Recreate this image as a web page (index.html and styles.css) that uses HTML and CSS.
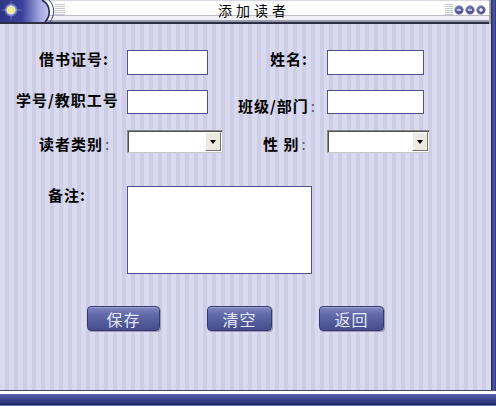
FILE: index.html
```html
<!DOCTYPE html>
<html lang="zh-CN">
<head>
<meta charset="utf-8">
<title>添加读者</title>
<link rel="stylesheet" href="styles.css">
</head>
<body>
<div class="window">
  <div class="frame">
    <div class="main">
      <header class="titlebar">
        <svg class="logo" width="55" height="22" viewBox="0 0 55 22">
          <defs>
            <linearGradient id="lg" x1="0" x2="1" y1="0" y2="0">
              <stop offset="0" stop-color="#2f3586"/>
              <stop offset="0.45" stop-color="#3a409a"/>
              <stop offset="0.82" stop-color="#a6aade"/>
              <stop offset="1" stop-color="#c4c7ec"/>
            </linearGradient>
            <radialGradient id="sun">
              <stop offset="0" stop-color="#ffffd0"/>
              <stop offset="0.6" stop-color="#f2ee70"/>
              <stop offset="1" stop-color="#d6cf5a"/>
            </radialGradient>
            <radialGradient id="glow">
              <stop offset="0.45" stop-color="#ffffff" stop-opacity="0.85"/>
              <stop offset="1" stop-color="#ffffff" stop-opacity="0"/>
            </radialGradient>
          </defs>
          <path d="M0 0 H42 C51 5 51 16 45 22 H0 Z" fill="url(#lg)"/>
          <path d="M42 0 C51 5 51 16 45 22" fill="none" stroke="#23275e" stroke-width="1.6"/>
          <path d="M49 0 C55 6 55 15 50 22" fill="none" stroke="#3a3f80" stroke-width="1"/>
          <line x1="1" y1="10" x2="22" y2="10" stroke="#ffffff" stroke-opacity="0.45" stroke-width="0.6"/>
          <line x1="11" y1="1" x2="11" y2="20" stroke="#ffffff" stroke-opacity="0.45" stroke-width="0.6"/>
          <circle cx="11" cy="10" r="7" fill="url(#glow)"/>
          <circle cx="11" cy="10" r="3.6" fill="url(#sun)" stroke="#ffffff" stroke-width="0.8"/>
        </svg>
        <div class="grip grip-left"></div>
        <div class="title">添加读者</div>
        <div class="spacer"></div>
        <div class="grip grip-right"></div>
        <svg class="ctrls" width="32" height="10" viewBox="0 0 32 10">
          <defs>
            <radialGradient id="cb" cx="0.4" cy="0.35" r="0.7">
              <stop offset="0" stop-color="#7a80c0"/>
              <stop offset="1" stop-color="#343a7a"/>
            </radialGradient>
          </defs>
          <circle cx="5" cy="5" r="4.3" fill="url(#cb)" stroke="#9a9ab8" stroke-width="0.9"/>
          <line x1="3" y1="5" x2="7" y2="5" stroke="#ffffff" stroke-width="1.2"/>
          <circle cx="16" cy="5" r="4.3" fill="url(#cb)" stroke="#9a9ab8" stroke-width="0.9"/>
          <line x1="14" y1="5" x2="18" y2="5" stroke="#ffffff" stroke-width="1.2"/>
          <circle cx="27" cy="5" r="4.3" fill="url(#cb)" stroke="#9a9ab8" stroke-width="0.9"/>
          <line x1="25" y1="5" x2="29" y2="5" stroke="#ffffff" stroke-width="1.2"/>
          <line x1="27" y1="3" x2="27" y2="7" stroke="#ffffff" stroke-width="1.2"/>
        </svg>
      </header>

      <form class="content">
        <div class="row row-1">
          <label class="lbl l-card">借书证号<span class="colon">:</span></label>
          <input class="field f-left h25" type="text">
          <label class="lbl l-name">姓名<span class="colon">:</span></label>
          <input class="field f-right h25" type="text">
        </div>

        <div class="row row-2">
          <label class="lbl l-no">学号/教职工号</label>
          <input class="field f-left h24" type="text">
          <label class="lbl l-dept">班级/部门<span class="colon thin">:</span></label>
          <input class="field f-right h24" type="text">
        </div>

        <div class="row row-3">
          <label class="lbl l-type">读者类别<span class="colon thin">:</span></label>
          <div class="select s-left"><span class="sel-btn"><span class="tri"></span></span></div>
          <label class="lbl l-sex">性 别<span class="colon thin">:</span></label>
          <div class="select s-right"><span class="sel-btn"><span class="tri"></span></span></div>
        </div>

        <div class="row row-4">
          <label class="lbl l-memo">备注<span class="colon">:</span></label>
          <textarea class="memo"></textarea>
        </div>

        <div class="actions">
          <button type="button" class="btn btn-wide">保存</button>
          <button type="button" class="btn">清空</button>
          <button type="button" class="btn">返回</button>
        </div>
      </form>
    </div>
    <div class="edge"></div>
  </div>
  <div class="footer"></div>
</div>
</body>
</html>
```

FILE: styles.css
```css
* { box-sizing: border-box; }

html, body {
  margin: 0;
  padding: 0;
  background: #3c4590;
}

body {
  width: 496px;
  height: 406px;
  overflow: hidden;
  font-family: "Noto Sans CJK SC", "Noto Sans", sans-serif;
  color: #000;
}

.window {
  width: 496px;
  height: 406px;
  display: flex;
  flex-direction: column;
}

.frame {
  display: flex;
  height: 390px;
}

.main {
  width: 491px;
  display: flex;
  flex-direction: column;
}

.edge {
  width: 5px;
  border-left: 1px solid #2a2c48;
  background: linear-gradient(90deg, #3c4590, #4a54a4 60%, #2c3270);
}

/* ---------- title bar ---------- */
.titlebar {
  height: 24px;
  display: flex;
  align-items: flex-start;
  border-right: 2px solid #a4a4b8;
  background: linear-gradient(to bottom,
    #d8d8e2 0 1px,
    #ffffff 1px 15px,
    #bcbcca 15px 16px,
    #f0f0f6 16px 20px,
    #9a9ab0 20px 22px,
    #2c2e46 22px 24px);
}

.logo {
  display: block;
  flex: none;
}

.grip {
  flex: none;
  height: 11px;
  margin-top: 4px;
  background: repeating-linear-gradient(to bottom, #c4c4d2 0 1px, transparent 1px 2px);
}

.grip-left { width: 10px; }
.grip-right { width: 8px; margin-right: 1px; }

.title {
  flex: none;
  margin-left: 153px;
  margin-top: 3px;
  font-size: 14px;
  line-height: 14px;
  letter-spacing: 4px;
  color: #000;
}

.spacer { flex: 1; }

.ctrls {
  display: block;
  flex: none;
  margin-top: 5px;
  margin-right: 3px;
}

/* ---------- content ---------- */
.content {
  flex: 1;
  margin: 0;
  padding-top: 26px;
  display: flex;
  flex-direction: column;
  background: repeating-linear-gradient(90deg,
    #d9d9ef 0 5px,
    #cdcee6 5px 9px);
}

.row {
  display: grid;
  grid-template-columns: 127px 111px 89px auto;
  align-items: start;
}

.row-2 { margin-top: 15px; }
.row-3 { margin-top: 16px; }
.row-4 { margin-top: 33px; grid-template-columns: 127px auto; }

.lbl {
  font-size: 15px;
  line-height: 15px;
  font-weight: bold;
  letter-spacing: 1px;
  white-space: nowrap;
}

.colon { letter-spacing: 0; }
.colon.thin {
  font-weight: normal;
  color: #555566;
  margin-left: 2px;
}

.l-card { padding-left: 39px; margin-top: 1px; }
.l-name { padding-left: 32px; margin-top: 1px; }
.l-no   { padding-left: 16px; margin-top: 2px; }
.l-dept { padding-left: 0;    margin-top: 8px; }
.l-type { padding-left: 39px; margin-top: 6px; }
.l-sex  { padding-left: 25px; margin-top: 6px; }
.l-memo { padding-left: 48px; margin-top: 1px; }

.field {
  display: block;
  margin: 0;
  padding: 0 3px;
  border: 1px solid #50508c;
  background: #fff;
  font: 13px "Noto Sans CJK SC", sans-serif;
  outline: none;
}

.f-left  { width: 81px; }
.f-right { width: 97px; }
.h25 { height: 25px; }
.h24 { height: 24px; }

/* dropdown */
.select {
  display: flex;
  justify-content: flex-end;
  height: 23px;
  padding: 1px;
  background: #fff;
  border: 1px solid;
  border-color: #8a8a8a #c8c8c8 #c8c8c8 #8a8a8a;
  box-shadow: inset 1px 1px 0 #505050;
}

.s-left  { width: 96px; }
.s-right { width: 103px; }

.sel-btn {
  width: 16px;
  height: 100%;
  display: flex;
  align-items: center;
  justify-content: center;
  background: #ece9e0;
  border: 1px solid;
  border-color: #ffffff #707070 #707070 #ffffff;
}

.tri {
  width: 0;
  height: 0;
  border-left: 3.5px solid transparent;
  border-right: 3.5px solid transparent;
  border-top: 4px solid #000;
}

.memo {
  display: block;
  width: 185px;
  height: 88px;
  margin: 0;
  padding: 2px;
  border: 1px solid #50508c;
  background: #fff;
  resize: none;
  outline: none;
}

/* buttons */
.actions {
  display: flex;
  gap: 47px;
  margin-top: 32px;
  padding-left: 87px;
}

.btn {
  width: 65px;
  height: 25px;
  margin: 0;
  padding: 0;
  border: 1px solid #343a6e;
  border-radius: 4px;
  background: linear-gradient(to bottom, #8088c2 0, #646cac 30%, #515999 70%, #464e8c 100%);
  box-shadow: 1px 1px 0 #9a9ab6, inset 0 1px 0 #9aa0d4;
  color: #e6e8f8;
  font-family: "Noto Sans CJK SC", sans-serif;
  font-size: 16px;
  line-height: 22px;
  letter-spacing: 1px;
}

.btn-wide { width: 73px; }

/* ---------- bottom frame ---------- */
.footer {
  height: 16px;
  background: linear-gradient(to bottom,
    #4a4a66 0 1px,
    #ffffff 1px 4px,
    #5a64ac 4px,
    #3e4690 9px,
    #2c3276 14px,
    #1a1e48 14px 15px,
    #6a80c8 15px 16px);
}
```
